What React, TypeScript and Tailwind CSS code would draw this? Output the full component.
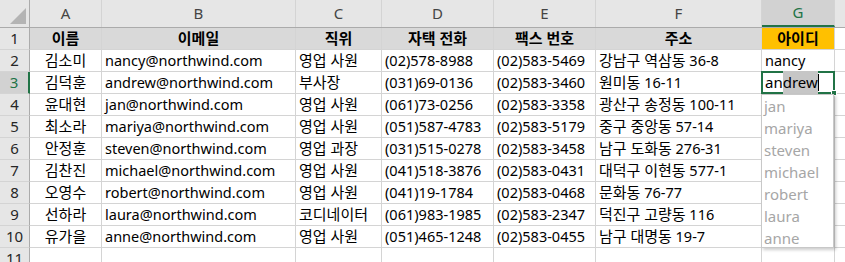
import React from "react";

const cols = ["A", "B", "C", "D", "E", "F", "G"];
const widths = ["w-[72px]", "w-[194px]", "w-[86px]", "w-[112px]", "w-[102px]", "w-[166px]", "w-[73px]"];

const header = ["이름", "이메일", "직위", "자택 전화", "팩스 번호", "주소", "아이디"];

const rows = [
  ["김소미", "nancy@northwind.com", "영업 사원", "(02)578-8988", "(02)583-5469", "강남구 역삼동 36-8", "nancy"],
  ["김덕훈", "andrew@northwind.com", "부사장", "(031)69-0136", "(02)583-3460", "원미동 16-11", ""],
  ["윤대현", "jan@northwind.com", "영업 사원", "(061)73-0256", "(02)583-3358", "광산구 송정동 100-11", ""],
  ["최소라", "mariya@northwind.com", "영업 사원", "(051)587-4783", "(02)583-5179", "중구 중앙동 57-14", ""],
  ["안정훈", "steven@northwind.com", "영업 과장", "(031)515-0278", "(02)583-3458", "남구 도화동 276-31", ""],
  ["김찬진", "michael@northwind.com", "영업 사원", "(041)518-3876", "(02)583-0431", "대덕구 이현동 577-1", ""],
  ["오영수", "robert@northwind.com", "영업 사원", "(041)19-1784", "(02)583-0468", "문화동 76-77", ""],
  ["선하라", "laura@northwind.com", "코디네이터", "(061)983-1985", "(02)583-2347", "덕진구 고량동 116", ""],
  ["유가을", "anne@northwind.com", "영업 사원", "(051)465-1248", "(02)583-0455", "남구 대명동 19-7", ""],
];

const suggestions = ["jan", "mariya", "steven", "michael", "robert", "laura", "anne"];

const font = { fontFamily: '"Noto Sans", "Noto Sans CJK KR", sans-serif' };

// hangul runs get a touch more size than latin, like Malgun Gothic does
function Txt({ s }: { s: string }) {
  return (
    <span className="whitespace-pre">
      {s.split(/([가-힣]+)/).map((part, i) =>
        /[가-힣]/.test(part) ? (
          <span key={i} className="text-[15px]">
            {part}
          </span>
        ) : (
          part
        )
      )}
    </span>
  );
}

function RowHead({ n, active }: { n: number; active?: boolean }) {
  return (
    <div
      className={
        "w-[30px] h-[22px] shrink-0 flex items-center justify-center text-[15px] border-b border-[#d4d4d4] " +
        (active
          ? "bg-[#d2d2d2] text-[#217346] border-r-2 border-r-[#217346]"
          : "bg-[#e6e6e6] text-[#262626] border-r border-r-[#ababab]")
      }
    >
      {n}
    </div>
  );
}

export default function App() {
  return (
    <div className="w-[845px] h-[262px] overflow-hidden bg-white text-[14.5px] text-black relative" style={font}>
      {/* column headers */}
      <div className="flex h-[28px] border-b border-[#ababab] bg-[#e6e6e6] text-[#444] text-[15px]">
        <div className="w-[30px] shrink-0 border-r border-[#ababab] relative">
          <div className="absolute right-[3px] bottom-[3px] w-0 h-0 border-l-[16px] border-l-transparent border-b-[16px] border-b-[#b4b4b4]" />
        </div>
        {cols.map((c, i) => (
          <div
            key={c}
            className={
              widths[i] +
              " shrink-0 flex items-center justify-center border-r border-[#d4d4d4] " +
              (c === "G" ? "bg-[#d2d2d2] text-[#217346] border-b-2 border-b-[#217346]" : "")
            }
          >
            {c}
          </div>
        ))}
        <div className="flex-1" />
      </div>

      {/* row 1 */}
      <div className="flex">
        <RowHead n={1} />
        {header.map((h, i) => (
          <div
            key={h}
            className={
              widths[i] +
              " h-[22px] shrink-0 flex items-center justify-center font-bold border-r border-b border-[#d4d4d4] " +
              (i === 6 ? "bg-[#ffc000]" : "bg-[#d9d9d9]")
            }
          >
            <Txt s={h} />
          </div>
        ))}
        <div className="flex-1 h-[22px] border-b border-[#d4d4d4]" />
      </div>

      {rows.map((r, ri) => (
        <div key={ri} className="flex">
          <RowHead n={ri + 2} active={ri === 1} />
          {r.map((v, i) => (
            <div
              key={i}
              className={
                widths[i] +
                " h-[22px] shrink-0 flex items-center whitespace-nowrap overflow-visible border-r border-b border-[#d4d4d4] " +
                (i === 0 ? "justify-center" : "pl-[3px]")
              }
            >
              <Txt s={v} />
            </div>
          ))}
          <div className="flex-1 h-[22px] border-b border-[#d4d4d4]" />
        </div>
      ))}

      <div className="flex">
        <RowHead n={11} />
        {widths.map((w, i) => (
          <div key={i} className={w + " h-[22px] shrink-0 border-r border-b border-[#d4d4d4]"} />
        ))}
        <div className="flex-1" />
      </div>

      {/* active cell G3 */}
      <div className="absolute left-[761px] top-[71px] w-[74px] h-[23px] border-2 border-[#217346] bg-white flex items-center pl-[2px] text-[15px]">
        <span>an</span>
        <span className="bg-[#c6c6c6]">drew</span>
        <span className="w-px h-[17px] bg-black" />
        <div className="absolute -right-[4px] -bottom-[4px] w-[6px] h-[6px] bg-[#217346] border border-white" />
      </div>

      {/* autocomplete list */}
      <div className="absolute left-[761px] top-[94px] w-[73px] h-[154px] bg-white border border-[#c8c8c8] shadow-[2px_2px_3px_rgba(0,0,0,0.2)] text-[#a6a6a6] text-[15px]">
        {suggestions.map((s) => (
          <div key={s} className="h-[22px] flex items-center pl-[2px]">
            {s}
          </div>
        ))}
      </div>
    </div>
  );
}
